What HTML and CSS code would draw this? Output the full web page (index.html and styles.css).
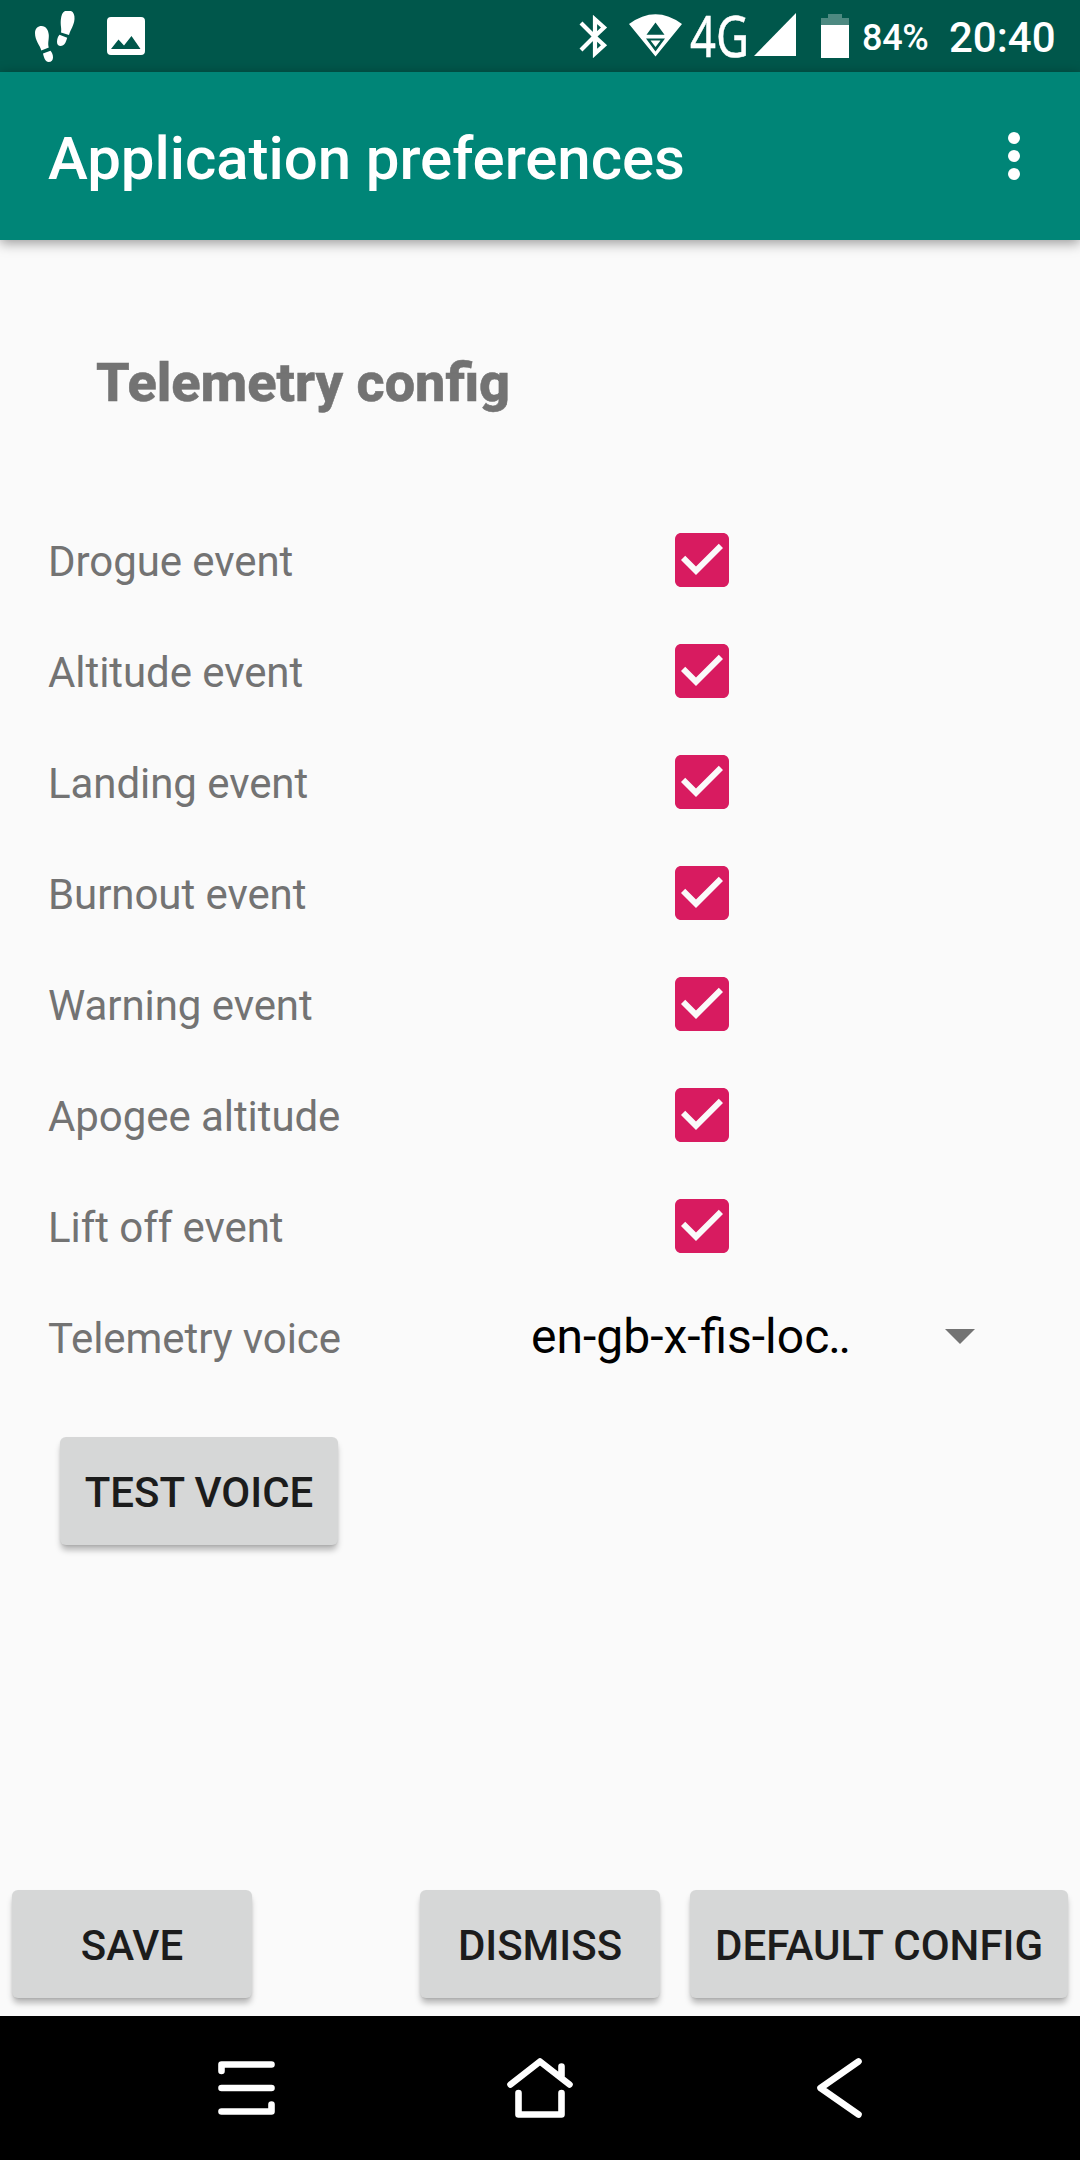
FILE: index.html
```html
<!DOCTYPE html>
<html lang="en">
<head>
<meta charset="utf-8">
<title>Application preferences</title>
<link rel="stylesheet" href="styles.css">
</head>
<body>
<svg class="defs" width="0" height="0">
  <symbol id="checked" viewBox="0 0 24 24">
    <path class="box" d="M19 3H5C3.900 3 3 3.900 3 5v14c0 1.100.900 2 2 2h14c1.100 0 2-.900 2-2V5c0-1.100-.900-2-2-2z"/>
    <path class="tick" d="M10 17l-5-5 1.410-1.410L10 14.170l7.590-7.590L19 8z"/>
  </symbol>
</svg>
<header class="status">
  <svg class="status-left" width="160" height="72" viewBox="0 0 160 72">
    <path d="M35 33C35 28.500 38 26 41.500 26C46 26 48.500 30 48.800 35C49 40 47.500 43 48.800 47.500L41.300 50.500C40 45 35 41 35 33Z"/>
    <path d="M43 53.500L50.500 50.800C52 52.500 53 55 53 57.500C53 60 51.500 62 48.500 62C45.500 62 44 58 43 53.500Z"/>
    <path d="M65 11H71C73.500 12 74.800 15 74.500 19C74 26 70.500 29 69 35L61 32.500C61.800 28 60.300 26 60.800 20C61.200 15 62.500 12 65 11Z"/>
    <path d="M59.500 34.800L67.200 37.800C66 42 64.500 46 60.500 46C58.500 46 57 44.500 57 42C57 39 58 36.500 59.500 34.800Z"/>
    <path fill-rule="evenodd" d="M111 17h30q4 0 4 4v30q0 4-4 4h-30q-4 0-4-4V21q0-4 4-4zM111 49h29.500L131.500 36 124 45.500 118.500 39.500z"/>
  </svg>
  <svg class="status-right" width="290" height="72" viewBox="560 0 290 72">
    <path class="line" d="M581 23L594.500 36.500 604 45.200 595 53.500V19.500L604 27.500 594.500 36.500 581 50"/>
    <path fill-rule="evenodd" d="M629 24Q655.500 4.500 682 24L655.500 56.500zM655.500 22.500L646.500 34.700H664.500zM646 38.500L655.500 51.500 665 38.500zM650.500 40.500H660.500L655.500 47z"/>
    <text class="net" x="690" y="57" textLength="59" lengthAdjust="spacingAndGlyphs">4G</text>
    <path d="M796 13V56H754z"/>
    <path class="dim" d="M821 25V18H828V14H842V18H849V25z"/>
    <path d="M821 25H849V58H821z"/>
  </svg>
  <span class="battery">84%</span>
  <span class="clock">20:40</span>
</header>
<div class="toolbar">
  <h1>Application preferences</h1>
  <svg width="12" height="48" viewBox="0 0 12 48"><circle cx="6" cy="6" r="6"/><circle cx="6" cy="24" r="6"/><circle cx="6" cy="42" r="6"/></svg>
</div>
<main>
  <h2>Telemetry config</h2>
  <div class="row"><span>Drogue event</span><svg class="check"><use href="#checked"/></svg></div>
  <div class="row"><span>Altitude event</span><svg class="check"><use href="#checked"/></svg></div>
  <div class="row"><span>Landing event</span><svg class="check"><use href="#checked"/></svg></div>
  <div class="row"><span>Burnout event</span><svg class="check"><use href="#checked"/></svg></div>
  <div class="row"><span>Warning event</span><svg class="check"><use href="#checked"/></svg></div>
  <div class="row"><span>Apogee altitude</span><svg class="check"><use href="#checked"/></svg></div>
  <div class="row"><span>Lift off event</span><svg class="check"><use href="#checked"/></svg></div>
  <div class="row voice"><span>Telemetry voice</span><div class="spinner">en-gb-x-fis-loc<span class="dots">..</span><svg width="30" height="15" viewBox="0 0 30 15"><path d="M0 0h30L15 15z"/></svg></div></div>
  <button class="test">TEST VOICE</button>
  <div class="actions">
    <button class="save">SAVE</button>
    <button class="dismiss">DISMISS</button>
    <button class="default">DEFAULT CONFIG</button>
  </div>
</main>
<nav>
  <svg width="1080" height="144" viewBox="0 2016 1080 144">
    <path d="M221.500 2071V2064.500H271.500M221.500 2088H271.500M221.500 2111.500H271.500V2104.500"/>
    <path d="M510.500 2084.500L540 2061.500L569.500 2084.500M561.500 2066.500V2077M518.500 2093V2114.500H561.500V2093"/>
    <path d="M858.500 2061.500L820.500 2088L858.500 2114.500"/>
  </svg>
</nav>
</body>
</html>
```
FILE: styles.css
```css
* { box-sizing: border-box; }
body {
  margin: 0;
  width: 1080px;
  height: 2160px;
  display: flex;
  flex-direction: column;
  background: #fafafa;
  color: #737373;
  font-family: Roboto, sans-serif;
}
svg { display: block; flex: none; }
.defs { position: absolute; }
.status {
  height: 72px;
  display: flex;
  align-items: center;
  background: #00574b;
  color: #fff;
  font-weight: 500;
  white-space: nowrap;
}
.status svg { fill: #fff; overflow: visible; }
.status-right { margin-left: 400px; }
.status .line { fill: none; stroke: #fff; stroke-width: 4.2; }
.status .dim { opacity: .3; }
.net { font: 400 56px "Noto Sans", sans-serif; stroke: #fff; stroke-width: .5px; }
.battery { width: 66px; margin: 3px 0 0 12px; font-size: 36px; letter-spacing: -.3px; }
.clock { margin: 3px 0 0 21px; font-size: 42px; }
.toolbar {
  height: 168px;
  padding: 0 60px 0 48px;
  display: flex;
  align-items: center;
  justify-content: space-between;
  background: #008577;
  color: #fff;
  box-shadow: 0 3px 12px rgba(0, 0, 0, .4);
}
.toolbar svg { fill: #fff; }
h1 { margin: 6px 0 0; font-size: 60px; font-weight: 500; line-height: 70px; letter-spacing: -.06px; }
main { height: 1776px; display: flex; flex-direction: column; align-items: flex-start; }
h2 {
  margin: 111px 0 0 96px;
  height: 153px;
  font-size: 54px;
  font-weight: 800;
  line-height: 64px;
  -webkit-text-stroke: .5px #737373;
}
.row { width: 1080px; height: 111px; padding-left: 48px; display: flex; align-items: center; font-size: 42px; }
.row > span { width: 618px; padding-top: 4px; letter-spacing: -.07px; }
.check { width: 72px; height: 72px; }
.box { fill: #d81b60; }
.tick { fill: #fafafa; }
.voice > span { width: 483px; }
.spinner { width: 444px; display: flex; align-items: center; color: #000; font-size: 48px; }
.dots { margin-left: -1px; letter-spacing: -2.5px; }
.spinner svg { margin-left: auto; fill: #737373; }
button {
  height: 108px;
  padding: 2px 0 0;
  border: 0;
  border-radius: 6px;
  background: #d6d7d7;
  color: #1c1c1c;
  font: 500 42px Roboto, sans-serif;
  box-shadow: 0 6px 6px -1px rgba(0, 0, 0, .28), 0 1px 2px rgba(0, 0, 0, .08);
}
.test { width: 278px; margin: 45px 0 0 60px; }
.actions { width: 1080px; margin-top: auto; padding: 0 12px 18px; display: flex; }
.save, .dismiss { width: 240px; }
.dismiss { margin-left: 168px; }
.default { width: 378px; margin-left: 30px; }
nav { height: 144px; background: #000; }
nav svg { fill: none; stroke: #fff; stroke-width: 6.6; stroke-linecap: round; stroke-linejoin: round; }
```
